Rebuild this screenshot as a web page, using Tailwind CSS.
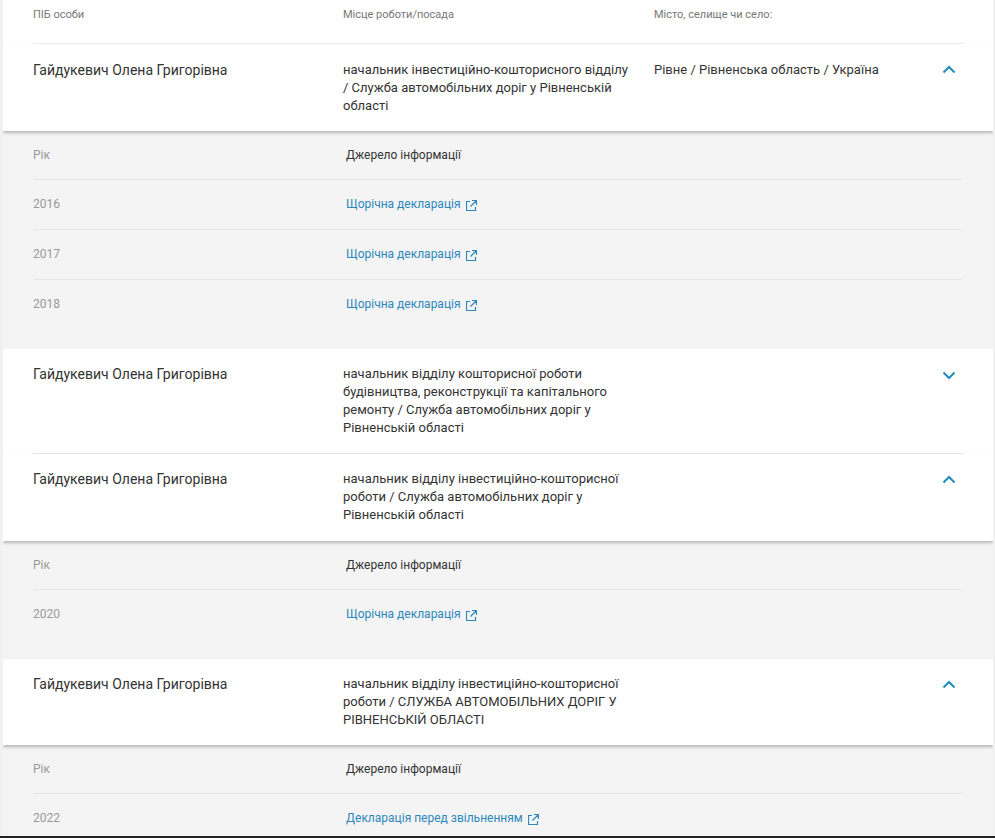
<!DOCTYPE html>
<html lang="uk"><head><meta charset="utf-8">
<script src="https://cdn.jsdelivr.net/npm/@tailwindcss/browser@4"></script>
<title>Декларації</title></head>
<body class="bg-[#f1f1f1] font-['Roboto',sans-serif]">
<div class="h-[838px] overflow-hidden flex flex-col">
<main class="h-[836px] overflow-hidden shrink-0 ml-[3px] mr-[2px] bg-white text-[#333]">
  <!-- header -->
  <div class="pl-[30px] pr-[30px]">
    <div class="flex h-[44px] border-b border-[#ececec] pt-[8px] text-[11px] leading-[14px] text-[#777]">
      <div class="w-[310px]">ПІБ особи</div><div class="w-[311px]">Місце роботи/посада</div><div>Місто, селище чи село:</div>
    </div>
  </div>

  <!-- row 1 -->
  <div class="relative z-10 h-[87px] pl-[30px] pr-[30px] shadow-[0_2px_3px_rgba(0,0,0,0.25)] bg-white">
    <div class="flex pt-[16px]">
      <div class="w-[310px] text-[14px] leading-[20px]">Гайдукевич Олена Григорівна</div>
      <div class="w-[311px] pr-[24px] pt-[1px] text-[13px] leading-[18px]">начальник інвестиційно-кошторисного відділу / Служба автомобільних доріг у Рівненській області</div>
      <div class="flex-1 pt-[1px] text-[13px] leading-[18px]">Рівне / Рівненська область / Україна</div>
      <svg class="w-[14px] h-[9px] mt-[5px] mr-[7px]" viewBox="0 0 14 9" fill="none" stroke="#1f8dbd" stroke-width="2"><path d="M1.5 7.5 7 2l5.5 5.5"/></svg>
    </div>
  </div>
  <!-- details 1 -->
  <div class="h-[218px] bg-[#f4f4f4] pl-[30px] pr-[30px] text-[12px]">
    <div class="flex h-[49px] border-b border-[#e6e6e6] pt-[16px] leading-[16px]"><div class="w-[313px] text-[#999]">Рік</div><div class="text-[#333]">Джерело інформації</div></div>
    <div class="flex h-[50px] border-b border-[#e6e6e6] pt-[16px] leading-[16px]"><div class="w-[313px] text-[#999]">2016</div><a class="flex items-center self-start text-[#2c87bb]">Щорічна декларація<svg class="w-[11px] h-[11px] ml-[5px] mt-[3px]" viewBox="0 0 11 11" fill="none" stroke="#2c87bb" stroke-width="1.2"><path d="M4 1.5H.5v9h9V7M6 .5h4.5V5M10.5.5 4.5 6.5"/></svg></a></div>
    <div class="flex h-[50px] border-b border-[#e6e6e6] pt-[16px] leading-[16px]"><div class="w-[313px] text-[#999]">2017</div><a class="flex items-center self-start text-[#2c87bb]">Щорічна декларація<svg class="w-[11px] h-[11px] ml-[5px] mt-[3px]" viewBox="0 0 11 11" fill="none" stroke="#2c87bb" stroke-width="1.2"><path d="M4 1.5H.5v9h9V7M6 .5h4.5V5M10.5.5 4.5 6.5"/></svg></a></div>
    <div class="flex h-[50px] pt-[16px] leading-[16px]"><div class="w-[313px] text-[#999]">2018</div><a class="flex items-center self-start text-[#2c87bb]">Щорічна декларація<svg class="w-[11px] h-[11px] ml-[5px] mt-[3px]" viewBox="0 0 11 11" fill="none" stroke="#2c87bb" stroke-width="1.2"><path d="M4 1.5H.5v9h9V7M6 .5h4.5V5M10.5.5 4.5 6.5"/></svg></a></div>
  </div>

  <!-- row 2 -->
  <div class="h-[105px] pl-[30px] pr-[30px] bg-white">
    <div class="flex pt-[15px] h-full border-b border-[#e6e6e6]">
      <div class="w-[310px] text-[14px] leading-[20px]">Гайдукевич Олена Григорівна</div>
      <div class="w-[311px] pr-[24px] pt-[1px] text-[13px] leading-[18px]">начальник відділу кошторисної роботи будівництва, реконструкції та капітального ремонту / Служба автомобільних доріг у Рівненській області</div>
      <div class="flex-1"></div>
      <svg class="w-[14px] h-[9px] mt-[7px] mr-[7px]" viewBox="0 0 14 9" fill="none" stroke="#1f8dbd" stroke-width="2"><path d="M1.5 1.5 7 7l5.5-5.5"/></svg>
    </div>
  </div>

  <!-- row 3 -->
  <div class="relative z-10 h-[87px] pl-[30px] pr-[30px] shadow-[0_2px_3px_rgba(0,0,0,0.25)] bg-white">
    <div class="flex pt-[15px]">
      <div class="w-[310px] text-[14px] leading-[20px]">Гайдукевич Олена Григорівна</div>
      <div class="w-[311px] pr-[24px] pt-[1px] text-[13px] leading-[18px]">начальник відділу інвестиційно-кошторисної роботи / Служба автомобільних доріг у Рівненській області</div>
      <div class="flex-1"></div>
      <svg class="w-[14px] h-[9px] mt-[6px] mr-[7px]" viewBox="0 0 14 9" fill="none" stroke="#1f8dbd" stroke-width="2"><path d="M1.5 7.5 7 2l5.5 5.5"/></svg>
    </div>
  </div>
  <!-- details 3 -->
  <div class="h-[118px] bg-[#f4f4f4] pl-[30px] pr-[30px] text-[12px]">
    <div class="flex h-[49px] border-b border-[#e6e6e6] pt-[16px] leading-[16px]"><div class="w-[313px] text-[#999]">Рік</div><div class="text-[#333]">Джерело інформації</div></div>
    <div class="flex h-[50px] pt-[16px] leading-[16px]"><div class="w-[313px] text-[#999]">2020</div><a class="flex items-center self-start text-[#2c87bb]">Щорічна декларація<svg class="w-[11px] h-[11px] ml-[5px] mt-[3px]" viewBox="0 0 11 11" fill="none" stroke="#2c87bb" stroke-width="1.2"><path d="M4 1.5H.5v9h9V7M6 .5h4.5V5M10.5.5 4.5 6.5"/></svg></a></div>
  </div>

  <!-- row 4 -->
  <div class="relative z-10 h-[86px] pl-[30px] pr-[30px] shadow-[0_2px_3px_rgba(0,0,0,0.25)] bg-white">
    <div class="flex pt-[15px]">
      <div class="w-[310px] text-[14px] leading-[20px]">Гайдукевич Олена Григорівна</div>
      <div class="w-[311px] pr-[24px] pt-[1px] text-[13px] leading-[18px]">начальник відділу інвестиційно-кошторисної роботи / СЛУЖБА АВТОМОБІЛЬНИХ ДОРІГ У РІВНЕНСЬКІЙ ОБЛАСТІ</div>
      <div class="flex-1"></div>
      <svg class="w-[14px] h-[9px] mt-[6px] mr-[7px]" viewBox="0 0 14 9" fill="none" stroke="#1f8dbd" stroke-width="2"><path d="M1.5 7.5 7 2l5.5 5.5"/></svg>
    </div>
  </div>
  <!-- details 4 -->
  <div class="h-[91px] bg-[#f4f4f4] pl-[30px] pr-[30px] text-[12px]">
    <div class="flex h-[49px] border-b border-[#e6e6e6] pt-[16px] leading-[16px]"><div class="w-[313px] text-[#999]">Рік</div><div class="text-[#333]">Джерело інформації</div></div>
    <div class="flex h-[42px] pt-[16px] leading-[16px]"><div class="w-[313px] text-[#999]">2022</div><a class="flex items-center self-start text-[#2c87bb]">Декларація перед звільненням<svg class="w-[11px] h-[11px] ml-[5px] mt-[3px]" viewBox="0 0 11 11" fill="none" stroke="#2c87bb" stroke-width="1.2"><path d="M4 1.5H.5v9h9V7M6 .5h4.5V5M10.5.5 4.5 6.5"/></svg></a></div>
  </div>
</main>
<div class="h-[2px] bg-[#222] shrink-0"></div>
</div>
</body></html>
